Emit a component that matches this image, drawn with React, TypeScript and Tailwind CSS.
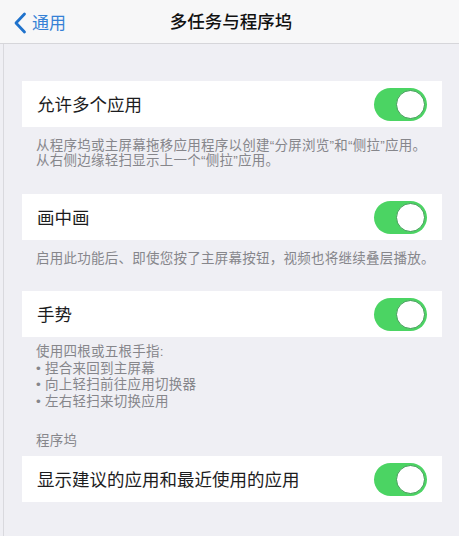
const cjk = "font-['Noto_Sans_CJK_SC',sans-serif]";
const note = "font-['Liberation_Sans','Noto_Sans_CJK_SC',sans-serif] text-[13.5px] text-[#86868b] whitespace-nowrap tracking-[0.25px]";

function Toggle() {
  return (
    <div className="relative h-[33px] w-[53px] shrink-0 rounded-full bg-[#4bd463]">
      <div className="absolute right-[2px] top-[2px] h-[29px] w-[29px] rounded-full border-[1.5px] border-[#3f9c55] bg-white" />
    </div>
  );
}

function Row({ label }: { label: string }) {
  return (
    <div className="flex h-[46px] items-center justify-between bg-white pl-[15px] pr-[15px]">
      <span className={`${cjk} text-[17.5px] leading-none text-[#1c1c1e]`}>{label}</span>
      <Toggle />
    </div>
  );
}

export default function App() {
  return (
    <div className="flex h-[536px] w-[459px] flex-col overflow-hidden bg-[#efeff4]">
      <div className="relative flex h-[44px] shrink-0 items-center justify-center border-b border-[#d6d6da] bg-[#f7f7f8]">
        <div className="absolute left-[13px] top-0 flex h-[44px] items-center gap-[5px]">
          <svg width="14" height="22" viewBox="0 0 14 22" className="mt-[1px]">
            <path d="M11.5 2 L3 11 L11.5 20" fill="none" stroke="#1f72cc" strokeWidth="2.8" strokeLinecap="round" strokeLinejoin="round" />
          </svg>
          <span className={`${cjk} text-[17px] text-[#3581d6]`}>通用</span>
        </div>
        <span className={`${cjk} ml-[3px] text-[17.5px] font-medium text-[#111]`}>多任务与程序坞</span>
      </div>

      <div className="ml-[3px] flex flex-1 border-l border-[#d9d9de]">
        <div className="flex w-full flex-col pl-[18px] pr-[17px]">
          <div className="mt-[37px]">
            <Row label="允许多个应用" />
            <div className={`${note} px-[14px] pt-[11px] leading-[15px]`}>
              从程序坞或主屏幕拖移应用程序以创建“分屏浏览”和“侧拉”应用。
              <br />
              从右侧边缘轻扫显示上一个“侧拉”应用。
            </div>
          </div>

          <div className="mt-[26px]">
            <Row label="画中画" />
            <div className={`${note} px-[14px] pt-[11px] leading-[15px]`}>
              启用此功能后、即使您按了主屏幕按钮，视频也将继续叠层播放。
            </div>
          </div>

          <div className="mt-[25px]">
            <Row label="手势" />
            <div className={`${note} px-[14px] pt-[7px] leading-[16.5px]`}>
              <div>使用四根或五根手指:</div>
              <div>• 捏合来回到主屏幕</div>
              <div>• 向上轻扫前往应用切换器</div>
              <div>• 左右轻扫来切换应用</div>
            </div>
          </div>

          <div className={`${note} mt-[23px] px-[14px] leading-[16px]`}>程序坞</div>
          <div className="mt-[7px]">
            <Row label="显示建议的应用和最近使用的应用" />
          </div>
        </div>
      </div>
    </div>
  );
}
